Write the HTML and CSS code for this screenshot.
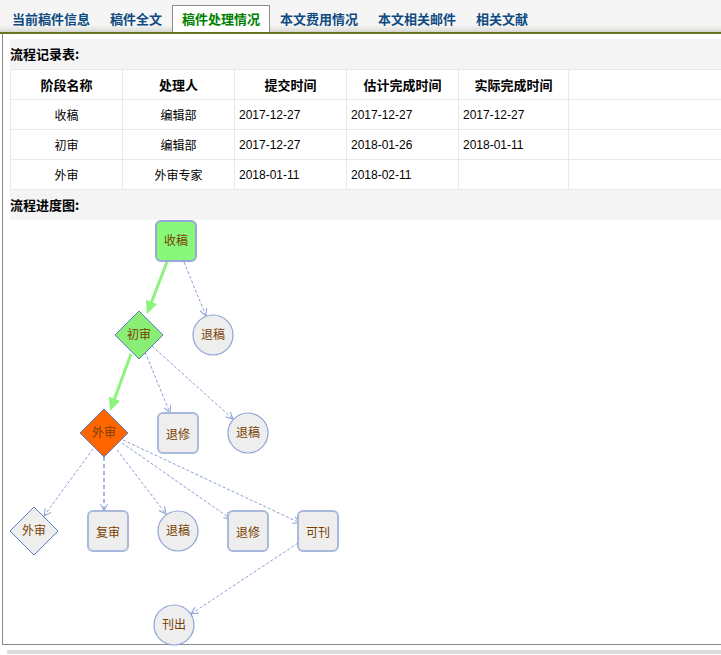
FILE: index.html
```html
<!DOCTYPE html>
<html lang="zh-CN">

<head>
  <meta charset="UTF-8">
  <title>稿件处理情况</title>
  <link rel="stylesheet" href="styles.css">
</head>

<body>
  <ul class="tabs">
    <li>当前稿件信息</li>
    <li>稿件全文</li>
    <li class="active">稿件处理情况</li>
    <li>本文费用情况</li>
    <li>本文相关邮件</li>
    <li>相关文献</li>
  </ul>

  <div class="content">
    <div class="panel">
      <div class="title">流程记录表:</div>
      <table class="records">
        <colgroup>
          <col class="c1"><col class="c1"><col class="c1"><col class="c1"><col class="c2"><col>
        </colgroup>
        <tr>
          <th>阶段名称</th>
          <th>处理人</th>
          <th>提交时间</th>
          <th>估计完成时间</th>
          <th>实际完成时间</th>
          <th></th>
        </tr>
        <tr>
          <td class="mid">收稿</td>
          <td class="mid">编辑部</td>
          <td class="date">2017-12-27</td>
          <td class="date">2017-12-27</td>
          <td class="date">2017-12-27</td>
          <td></td>
        </tr>
        <tr>
          <td class="mid">初审</td>
          <td class="mid">编辑部</td>
          <td class="date">2017-12-27</td>
          <td class="date">2018-01-26</td>
          <td class="date">2018-01-11</td>
          <td></td>
        </tr>
        <tr>
          <td class="mid">外审</td>
          <td class="mid">外审专家</td>
          <td class="date">2018-01-11</td>
          <td class="date">2018-02-11</td>
          <td class="date"></td>
          <td></td>
        </tr>
      </table>
      <div class="title">流程进度图:</div>
    </div>

    <svg class="chart" width="718" height="426" viewBox="3 219 718 426">
      <defs>
        <marker id="solid" markerUnits="userSpaceOnUse" markerWidth="13" markerHeight="12" viewBox="0 0 13 12" refX="1" refY="6" orient="auto">
          <path d="M0,0 L13,6 L0,12 z" fill="#8cf47c" />
        </marker>
        <marker id="open" markerUnits="userSpaceOnUse" markerWidth="9" markerHeight="9" viewBox="0 0 9 9" refX="8" refY="4.5" orient="auto">
          <path d="M1,1 L8,4.5 L1,8" fill="none" stroke="#8a9fd6" stroke-width="1" />
        </marker>
      </defs>

      <!-- edges -->
      <line class="flow" x1="167" y1="261" x2="151.2" y2="301.8" />
      <line class="flow" x1="131" y1="353" x2="114.2" y2="398.7" />

      <line class="edge" x1="184" y1="261" x2="206" y2="315" />
      <line class="edge" x1="145" y1="351" x2="170" y2="412" />
      <line class="edge" x1="152" y1="345" x2="233" y2="418" />
      <line class="edge" x1="93" y1="448" x2="44" y2="515" />
      <line class="edge thick" x1="104" y1="456" x2="104" y2="510" />
      <line class="edge" x1="117" y1="449" x2="166" y2="513" />
      <line class="edge" x1="122" y1="442" x2="231" y2="518" />
      <line class="edge" x1="123" y1="439" x2="300" y2="522" />
      <line class="edge" x1="298" y1="542" x2="191" y2="613" />

      <!-- nodes -->
      <rect class="box start" x="156" y="220" width="40" height="40" rx="5" />
      <text x="176" y="244">收稿</text>

      <polygon class="gate pass" points="139,310 163,334 139,358 115,334" />
      <text x="139" y="338">初审</text>

      <circle class="end" cx="213" cy="334" r="20" />
      <text x="213" y="338">退稿</text>

      <polygon class="gate now" points="104,408 128,432 104,456 80,432" />
      <text x="104" y="436">外审</text>

      <rect class="box" x="158" y="412" width="40" height="40" rx="5" />
      <text x="178" y="438">退修</text>

      <circle class="end" cx="248" cy="432" r="20" />
      <text x="248" y="436">退稿</text>

      <polygon class="gate" points="34,506 58,530 34,554 10,530" />
      <text x="34" y="534">外审</text>

      <rect class="box" x="88" y="510" width="40" height="40" rx="5" />
      <text x="108" y="536">复审</text>

      <circle class="end" cx="178" cy="530" r="20" />
      <text x="178" y="534">退稿</text>

      <rect class="box" x="228" y="510" width="40" height="40" rx="5" />
      <text x="248" y="536">退修</text>

      <rect class="box" x="298" y="510" width="40" height="40" rx="5" />
      <text x="318" y="536">可刊</text>

      <circle class="end" cx="174" cy="624" r="20" />
      <text x="174" y="628">刊出</text>
    </svg>
  </div>

  <div class="foot"></div>
</body>

</html>
```

FILE: styles.css
```css
body {
  margin: 0;
  width: 721px;
  height: 655px;
  overflow: hidden;
  background: white;
  font-family: "Noto Sans CJK SC", sans-serif;
  font-size: 12px;
  color: #000;
}

.tabs {
  display: flex;
  margin: 0;
  padding: 5px 0 0 2px;
  height: 27px;
  list-style: none;
  background: linear-gradient(#f5f5f5 0, #f5f5f5 78%, #e4e4e0 92%, #d4d4d0 100%);
  border-bottom: 2px solid #66751f;
}

.tabs li {
  padding: 0 9px;
  font-size: 13px;
  font-weight: bold;
  line-height: 26px;
  color: #0f4a80;
  border: 1px solid transparent;
  border-bottom: none;
}

.tabs li.active {
  background: white;
  color: #008000;
  border-color: #8c8c8c;
}

.content {
  margin-left: 2px;
  padding-top: 5px;
  box-sizing: border-box;
  border-left: 1px solid #8a8a8a;
  border-bottom: 1px solid #8a8a8a;
  height: 611px;
}

.panel {
  margin-left: 7px;
  width: 730px;
  background: #f4f4f4;
}

.title {
  height: 30px;
  line-height: 30px;
  font-size: 13px;
  font-weight: bold;
}

.records {
  width: 100%;
  border-collapse: collapse;
  table-layout: fixed;
  background: white;
}

.records col.c1 {
  width: 112px;
}

.records col.c2 {
  width: 110px;
}

.records th,
.records td {
  height: 30px;
  padding: 0 4px;
  border: 1px solid #e8e8e8;
  box-sizing: border-box;
}

.records th {
  font-size: 13px;
  text-align: center;
}

.records td.mid {
  text-align: center;
}

.records td.date {
  font-family: "Liberation Sans", sans-serif;
  font-size: 12px;
}

.chart {
  display: block;
}

.chart text {
  font-family: "Noto Sans CJK SC", sans-serif;
  font-size: 12px;
  fill: #7a3e00;
  text-anchor: middle;
}

.flow {
  stroke: #8cf47c;
  stroke-width: 3;
  marker-end: url(#solid);
}

.edge {
  stroke: #8a9fd6;
  stroke-width: 1;
  stroke-dasharray: 3 2;
  marker-end: url(#open);
}

.edge.thick {
  stroke: #a6b7e2;
  stroke-width: 2;
  stroke-dasharray: 4 3;
}

.box {
  fill: #eeeeee;
  stroke: #a9b9db;
  stroke-width: 2;
}

.box.start {
  fill: #88f77a;
  stroke: #95a9d6;
}

.end {
  fill: #eeeeee;
  stroke: #8ea2d6;
  stroke-width: 1.2;
}

.gate {
  fill: #eeeeee;
  stroke: #5a7cc4;
  stroke-width: 1;
}

.gate.pass {
  fill: #8aee76;
}

.gate.now {
  fill: #ff6600;
}

.foot {
  margin: 5px 0 0 7px;
  height: 4px;
  background: #dcdcdc;
}
```
